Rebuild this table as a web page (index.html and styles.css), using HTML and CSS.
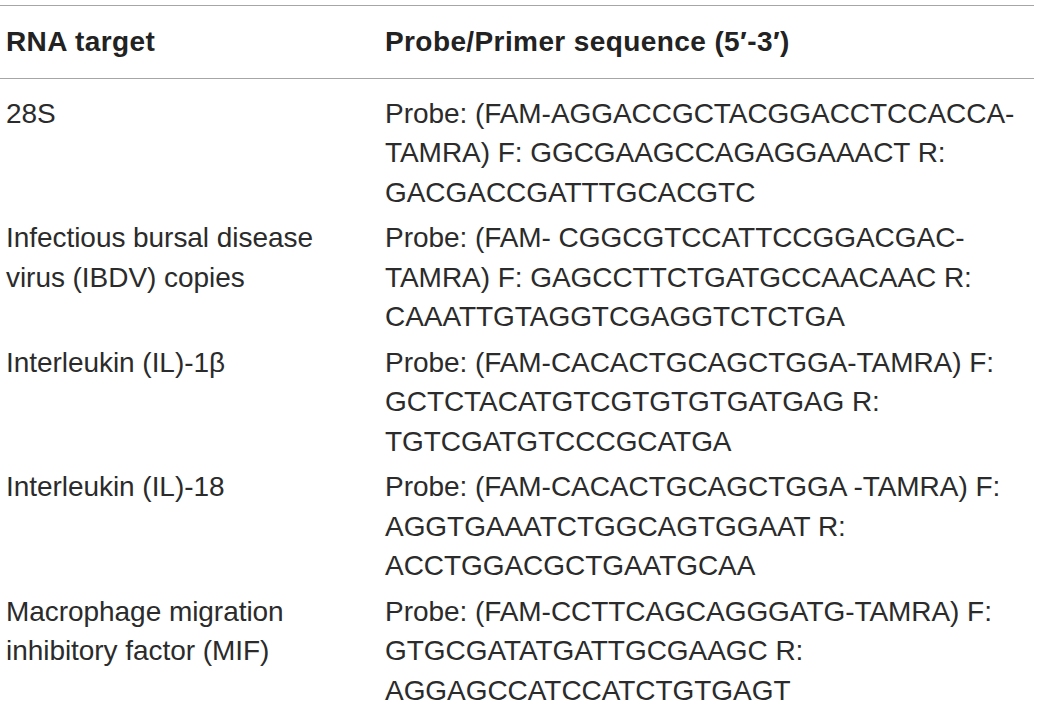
FILE: index.html
```html
<!DOCTYPE html>
<html>
<head>
<meta charset="utf-8">
<link rel="stylesheet" href="styles.css">
</head>
<body>
<table class="tbl">
  <thead>
    <tr class="head-row">
      <th class="col-a">RNA target</th>
      <th class="col-b">Probe/Primer sequence (5′-3′)</th>
    </tr>
  </thead>
  <tbody>
    <tr class="row first">
      <td>28S</td>
      <td>Probe: (FAM-AGGACCGCTACGGACCTCCACCA-<br>TAMRA) F: GGCGAAGCCAGAGGAAACT R:<br>GACGACCGATTTGCACGTC</td>
    </tr>
    <tr class="row">
      <td>Infectious bursal disease<br>virus (IBDV) copies</td>
      <td>Probe: (FAM- CGGCGTCCATTCCGGACGAC-<br>TAMRA) F: GAGCCTTCTGATGCCAACAAC R:<br>CAAATTGTAGGTCGAGGTCTCTGA</td>
    </tr>
    <tr class="row">
      <td>Interleukin (IL)-1β</td>
      <td>Probe: (FAM-CACACTGCAGCTGGA-TAMRA) F:<br>GCTCTACATGTCGTGTGTGATGAG R:<br>TGTCGATGTCCCGCATGA</td>
    </tr>
    <tr class="row">
      <td>Interleukin (IL)-18</td>
      <td>Probe: (FAM-CACACTGCAGCTGGA -TAMRA) F:<br>AGGTGAAATCTGGCAGTGGAAT R:<br>ACCTGGACGCTGAATGCAA</td>
    </tr>
    <tr class="row">
      <td>Macrophage migration<br>inhibitory factor (MIF)</td>
      <td>Probe: (FAM-CCTTCAGCAGGGATG-TAMRA) F:<br>GTGCGATATGATTGCGAAGC R:<br>AGGAGCCATCCATCTGTGAGT</td>
    </tr>
  </tbody>
</table>
</body>
</html>
```
FILE: styles.css
```css
html, body {
  margin: 0;
  padding: 0;
  background: #ffffff;
}
body {
  padding-top: 5px;
}
.tbl {
  width: 1034px;
  border-collapse: collapse;
  border-top: 1px solid #a6a6a6;
  font-family: "Liberation Sans", Arial, sans-serif;
  font-size: 28px;
  line-height: 39.5px;
  color: #2b2b2b;
  letter-spacing: -0.05px;
}
.tbl th {
  text-align: left;
  font-weight: bold;
  letter-spacing: 0.4px;
  color: #222222;
  padding: 16px 6px 16px 6px;
  border-top: 1px solid #a6a6a6;
  border-bottom: 1px solid #a6a6a6;
  vertical-align: top;
}
.col-a { width: 367px; }
.tbl td {
  padding: 3px 6px 3px 6px;
  vertical-align: top;
}
.row.first td {
  padding-top: 15px;
}
```
